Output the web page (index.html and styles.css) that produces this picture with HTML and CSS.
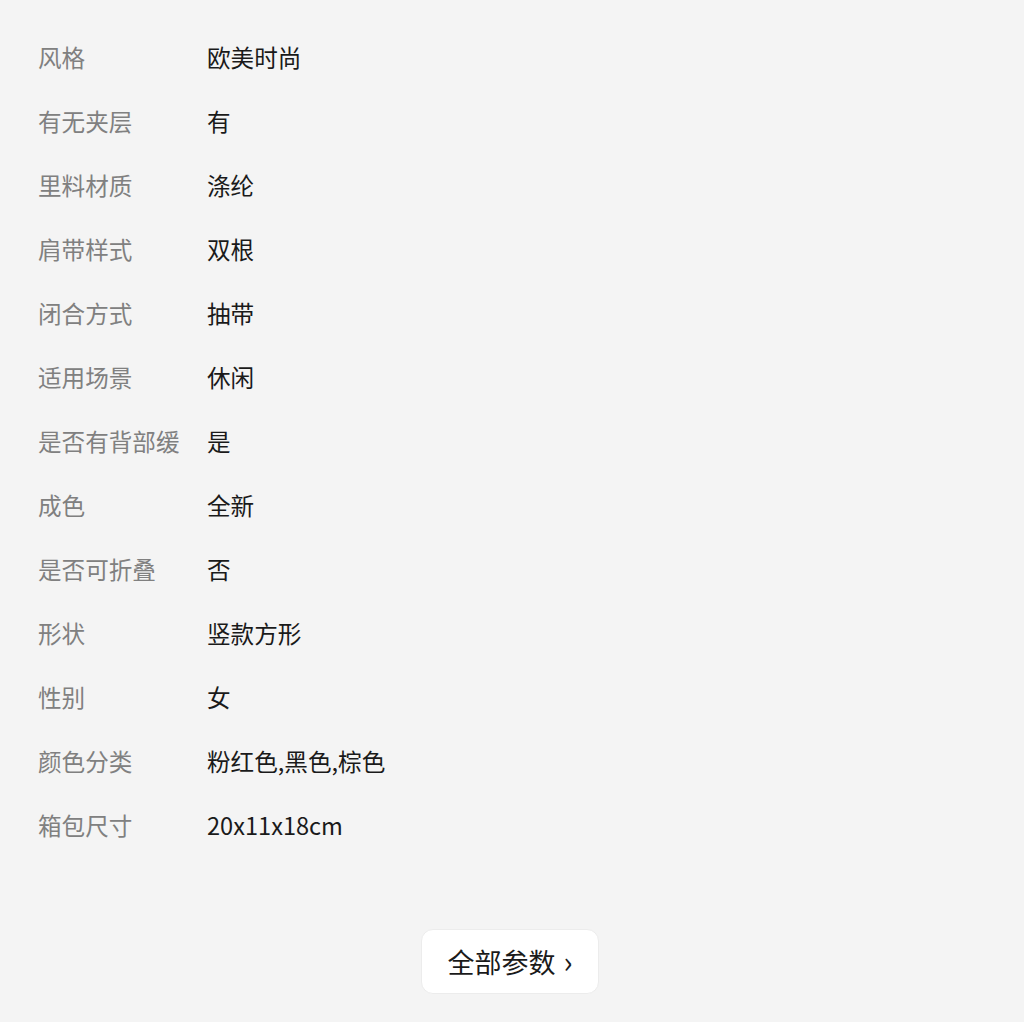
FILE: index.html
```html
<!DOCTYPE html>
<html lang="zh-CN">
<head>
    <meta charset="UTF-8">
    <meta name="viewport" content="width=device-width, initial-scale=1.0">
    <title>商品参数</title>
    <link rel="stylesheet" href="styles.css">
</head>
<body>
    <div class="params">
        <ul class="param-list">
            <li class="param-row"><span class="param-name">风格</span><span class="param-value">欧美时尚</span></li>
            <li class="param-row"><span class="param-name">有无夹层</span><span class="param-value">有</span></li>
            <li class="param-row"><span class="param-name">里料材质</span><span class="param-value">涤纶</span></li>
            <li class="param-row"><span class="param-name">肩带样式</span><span class="param-value">双根</span></li>
            <li class="param-row"><span class="param-name">闭合方式</span><span class="param-value">抽带</span></li>
            <li class="param-row"><span class="param-name">适用场景</span><span class="param-value">休闲</span></li>
            <li class="param-row"><span class="param-name">是否有背部缓</span><span class="param-value">是</span></li>
            <li class="param-row"><span class="param-name">成色</span><span class="param-value">全新</span></li>
            <li class="param-row"><span class="param-name">是否可折叠</span><span class="param-value">否</span></li>
            <li class="param-row"><span class="param-name">形状</span><span class="param-value">竖款方形</span></li>
            <li class="param-row"><span class="param-name">性别</span><span class="param-value">女</span></li>
            <li class="param-row"><span class="param-name">颜色分类</span><span class="param-value">粉红色,黑色,棕色</span></li>
            <li class="param-row"><span class="param-name">箱包尺寸</span><span class="param-value">20x11x18cm</span></li>
        </ul>

        <div class="more-wrap">
            <button class="more-btn">全部参数<span class="arrow">›</span></button>
        </div>
    </div>
</body>
</html>
```

FILE: styles.css
```css
* {
    box-sizing: border-box;
    margin: 0;
    padding: 0;
}

body {
    background: #f4f4f4;
    font-family: "Noto Sans CJK SC", "Noto Sans", sans-serif;
    color: #1a1a1a;
}

.params {
    padding: 25px 0 0 38px;
}

.param-list {
    list-style: none;
}

.param-row {
    display: flex;
    align-items: center;
    height: 64px;
    font-size: 23.6px;
}

.param-name {
    width: 169px;
    flex-shrink: 0;
    color: #808080;
}

.param-value {
    color: #1a1a1a;
}

.more-wrap {
    display: flex;
    justify-content: center;
    padding: 72px 42px 0 0;
}

.more-btn {
    width: 178px;
    height: 65px;
    background: #ffffff;
    border: 1px solid #ececec;
    border-radius: 12px;
    font-family: inherit;
    font-size: 27px;
    color: #1a1a1a;
    display: flex;
    align-items: center;
    justify-content: center;
    gap: 8px;
    cursor: pointer;
}

.arrow {
    font-size: 30px;
    line-height: 1;
    margin-top: -4px;
}
```
